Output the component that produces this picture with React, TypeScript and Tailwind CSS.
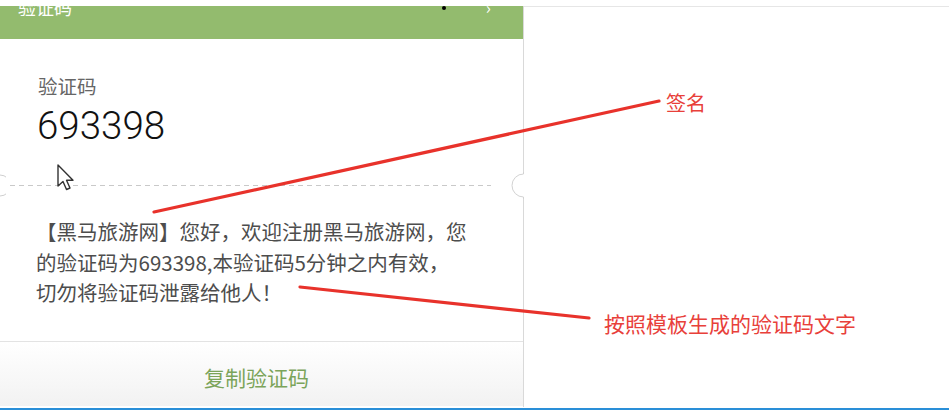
import React from "react";

const cjk = "font-['Noto_Sans_CJK_SC','Noto_Sans',sans-serif]";

function Cursor() {
  return (
    <svg className="absolute left-[56px] top-[163px]" width="22" height="30" viewBox="0 0 22 30">
      <path d="M2 2 L2 23 L7 18.5 L10.5 26.5 L14 25 L10.5 17.3 L17 17.3 Z" fill="#fff" stroke="#333" strokeWidth="1.4" strokeLinejoin="round" />
    </svg>
  );
}

function Notch({ side }: { side: "left" | "right" }) {
  if (side === "left") {
    return (
      <svg className="absolute left-0 -top-[12px]" width="6" height="25" viewBox="0 0 6 25">
        <path d="M0 2 A 10.5 10.5 0 0 1 0 23" fill="#fff" stroke="#cfcfcf" strokeWidth="1" />
      </svg>
    );
  }
  return (
    <svg className="absolute -right-[1px] -top-[13px]" width="13" height="27" viewBox="0 0 13 27">
      <rect x="0" y="0" width="13" height="27" fill="#fff" />
      <path d="M12.5 0 L12.5 2 A 11.5 11.5 0 0 0 12.5 25 L12.5 27" fill="none" stroke="#d2d2d2" strokeWidth="1" />
    </svg>
  );
}

export default function App() {
  return (
    <div className={`relative w-[949px] h-[410px] overflow-hidden bg-white ${cjk}`}>
      <div className="h-[7px] border-b border-[#e6e6e6]" />
      <div className="flex flex-col w-[524px] h-[401px] -mt-px border-r border-[#d9d9d9]">
        <div className="relative h-[33px] bg-[#93bb6e] overflow-hidden flex items-start justify-between pl-[18px] pr-[32px]">
          <div className="-mt-[9px] text-[18px] leading-[20px] text-white">验证码</div>
          <div className="flex items-start gap-[40px]">
            <div className="w-[4px] h-[4px] rounded-full bg-black" />
            <div className="-mt-[9px] text-[17px] leading-[20px] text-white">›</div>
          </div>
        </div>
        <div className="pl-[38px] mt-[36px] text-[19.5px] leading-[22px] text-[#666]">验证码</div>
        <div className="pl-[37px] mt-[8px] text-[38.5px] leading-[42px] text-[#111] font-['Roboto',sans-serif] font-light">693398</div>
        <div className="relative mt-[38px] h-px">
          <div className="ml-[10px] mr-[32px] h-px bg-[repeating-linear-gradient(90deg,#c9c9c9_0_5px,transparent_5px_9px)]" />
          <Notch side="left" />
          <Notch side="right" />
        </div>
        <div className="pl-[36px] mt-[30px] text-[20.5px] leading-[30.5px] text-[#4d4d4d]">
          【黑马旅游网】您好，欢迎注册黑马旅游网，您
          <br />
          的验证码为693398,本验证码5分钟之内有效，
          <br />
          切勿将验证码泄露给他人！
        </div>
        <div className="mt-[33px] border-t border-[#e3e3e3] h-[65px] flex justify-center pt-[23px] bg-gradient-to-b from-white to-[#f2f2f2]">
          <div className="text-[21px] leading-[24px] text-[#7ba45a] -ml-[10px]">复制验证码</div>
        </div>
      </div>
      <div className="absolute left-0 bottom-0 w-[949px] h-[2px] bg-[#2a8fd8]" />
      <Cursor />
      <svg className="absolute left-0 top-0" width="949" height="410">
        <line x1="154" y1="212" x2="659" y2="101" stroke="#e8322b" strokeWidth="3.2" strokeLinecap="round" />
        <line x1="300" y1="287" x2="589" y2="318" stroke="#e8322b" strokeWidth="3.2" strokeLinecap="round" />
      </svg>
      <div className="absolute left-[666px] top-[90px] text-[20px] leading-[26px] text-[#e8403a]">签名</div>
      <div className="absolute left-[604px] top-[310px] text-[21px] leading-[26px] text-[#e8403a]">按照模板生成的验证码文字</div>
    </div>
  );
}
